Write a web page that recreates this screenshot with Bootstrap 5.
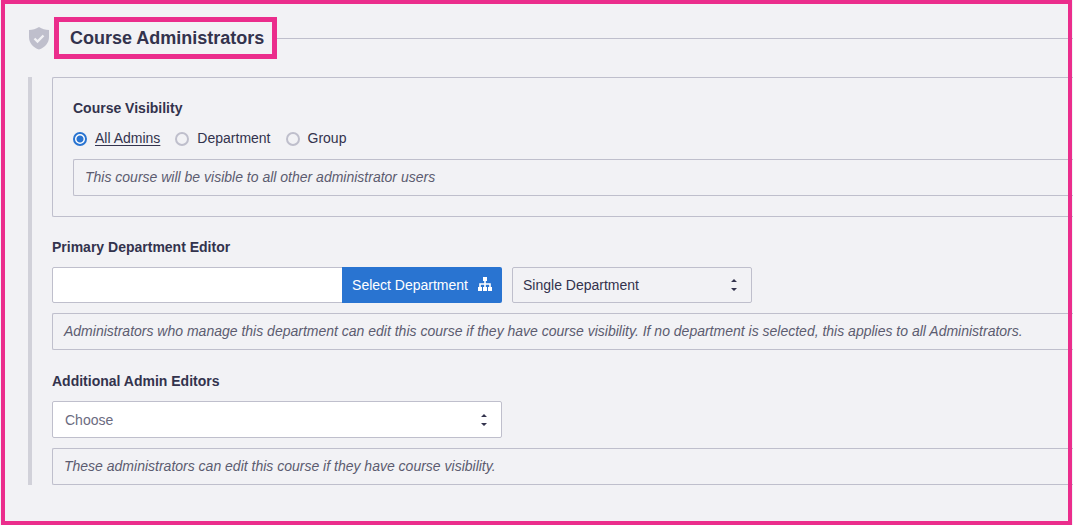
<!DOCTYPE html>
<html lang="en">
<head>
<meta charset="utf-8">
<meta name="viewport" content="width=device-width, initial-scale=1">
<title>Course Administrators</title>
<link href="https://cdn.jsdelivr.net/npm/bootstrap@5.3.0/dist/css/bootstrap.min.css" rel="stylesheet">
<style>
  :root { --ink: #33334d; --line: #bfbfcc; --page: #f2f2f5; --accent: #2974d1; --pink: #eb2d8c; }
  body { background: var(--page); color: var(--ink); font: 14px/20px "Liberation Sans", Arial, sans-serif; }
  .page { min-height: 100vh; padding: 17px 0 36px 28px; }
  .page-frame { position: absolute; inset: 0 1px 0 1px; border: 4px solid var(--pink); pointer-events: none; }
  .shield { width: 22px; height: 24px; margin-right: 4px; }
  .section-title { margin: 0; padding: 5px 8px 5px 11px; border: 5px solid var(--pink); font-size: 18px; line-height: 22px; font-weight: 700; }
  .rule { height: 1px; background: var(--line); }
  .section-body { margin-top: 18px; padding-left: 20px; border-left: 4px solid #d1d1d9; }
  .panel { padding: 20px 0 20px 20px; }
  .panel, .note { border: 1px solid var(--line); border-right: 0; border-radius: 2px 0 0 2px; }
  .note { margin: 10px 0 0; padding: 7px 11px 8px; color: #5c5c70; font-style: italic; }
  .field-label { display: block; margin: 0 0 10px; font-weight: 700; }
  .choices { gap: 15px; line-height: 21px; }
  .form-check-input.dot { width: 14px; height: 14px; margin: 1px 0 0; border: 2px solid var(--line); background-color: transparent; }
  .form-check-input.dot:checked { border-color: var(--accent); background: radial-gradient(circle, var(--accent) 0 3px, #fff 4px); }
  .dot:checked + label { text-decoration: underline; text-underline-offset: 2px; }
  .group { margin-top: 20px; }
  .group + .group { margin-top: 21px; }
  .form-control, .form-select { border-color: var(--line); border-radius: 2px; color: var(--ink); font-size: 14px; line-height: 20px; }
  .dept-row { gap: 10px; }
  .dept { width: 450px; height: 36px; }
  .btn-dept { --bs-btn-color: #fff; --bs-btn-bg: var(--accent); --bs-btn-hover-color: #fff; --bs-btn-hover-bg: #2266bb; padding: 0 10px; border: 0; border-radius: 2px; font-size: 14px; }
  .org-icon { width: 14px; height: 14px; margin: 0 0 2px 10px; }
  .form-select { padding: 7px 30px 7px 10px; background-image: url("data:image/svg+xml,%3Csvg xmlns='http://www.w3.org/2000/svg' viewBox='0 0 8 12'%3E%3Cpath fill='%2333334d' d='M4 0 7 3H1zM4 12 7 9H1z'/%3E%3C/svg%3E"); background-size: 8px 12px; background-position: right 13px center; }
  .mode { width: 240px; height: 36px; background-color: var(--page); }
  .editors { width: 450px; height: 37px; padding-top: 8px; padding-left: 12px; }
  .form-select.editors { color: #6b6b80; }
</style>
</head>
<body>
<main class="page position-relative overflow-hidden">
  <header class="d-flex align-items-center">
    <svg class="shield" viewBox="0 0 22 24" aria-hidden="true"><path fill="#bfbfcc" d="M11 1 C8 3 4.500 4 1 4 V11 C1 17 5 21.500 11 23.500 C17 21.500 21 17 21 11 V4 C17.500 4 14 3 11 1Z"/><path d="M6.500 12.500 9.500 15.500 15.500 9.500" fill="none" stroke="#f2f2f5" stroke-width="2.400"/></svg>
    <h1 class="section-title">Course Administrators</h1>
    <div class="rule flex-grow-1"></div>
  </header>

  <form class="section-body">
    <div class="panel" role="radiogroup" aria-labelledby="visibility-label">
      <div class="field-label" id="visibility-label">Course Visibility</div>
      <div class="choices d-flex">
        <div class="d-flex align-items-center gap-2"><input class="form-check-input dot" type="radio" name="visibility" id="vis-all" checked><label for="vis-all">All Admins</label></div>
        <div class="d-flex align-items-center gap-2"><input class="form-check-input dot" type="radio" name="visibility" id="vis-dept"><label for="vis-dept">Department</label></div>
        <div class="d-flex align-items-center gap-2"><input class="form-check-input dot" type="radio" name="visibility" id="vis-group"><label for="vis-group">Group</label></div>
      </div>
      <p class="note">This course will be visible to all other administrator users</p>
    </div>

    <div class="group">
      <label class="field-label" for="department">Primary Department Editor</label>
      <div class="dept-row d-flex">
        <div class="input-group flex-nowrap dept">
          <input class="form-control" type="text" id="department">
          <button class="btn btn-dept d-flex align-items-center" type="button">Select Department
            <svg class="org-icon" viewBox="0 0 14 14" aria-hidden="true"><path fill="#fff" d="M5 0h4v4H5zM0 10h4v4H0zM5 10h4v4H5zM10 10h4v4h-4z"/><path d="M7 4v6M2 10V7h10v3" fill="none" stroke="#fff" stroke-width="1.600"/></svg>
          </button>
        </div>
        <select class="form-select mode" aria-label="Department scope"><option>Single Department</option></select>
      </div>
      <p class="note">Administrators who manage this department can edit this course if they have course visibility. If no department is selected, this applies to all Administrators.</p>
    </div>

    <div class="group">
      <label class="field-label" for="editors">Additional Admin Editors</label>
      <select class="form-select editors" id="editors"><option>Choose</option></select>
      <p class="note">These administrators can edit this course if they have course visibility.</p>
    </div>
  </form>
  <div class="page-frame"></div>
</main>
<script src="https://cdn.jsdelivr.net/npm/bootstrap@5.3.0/dist/js/bootstrap.bundle.min.js"></script>
</body>
</html>
